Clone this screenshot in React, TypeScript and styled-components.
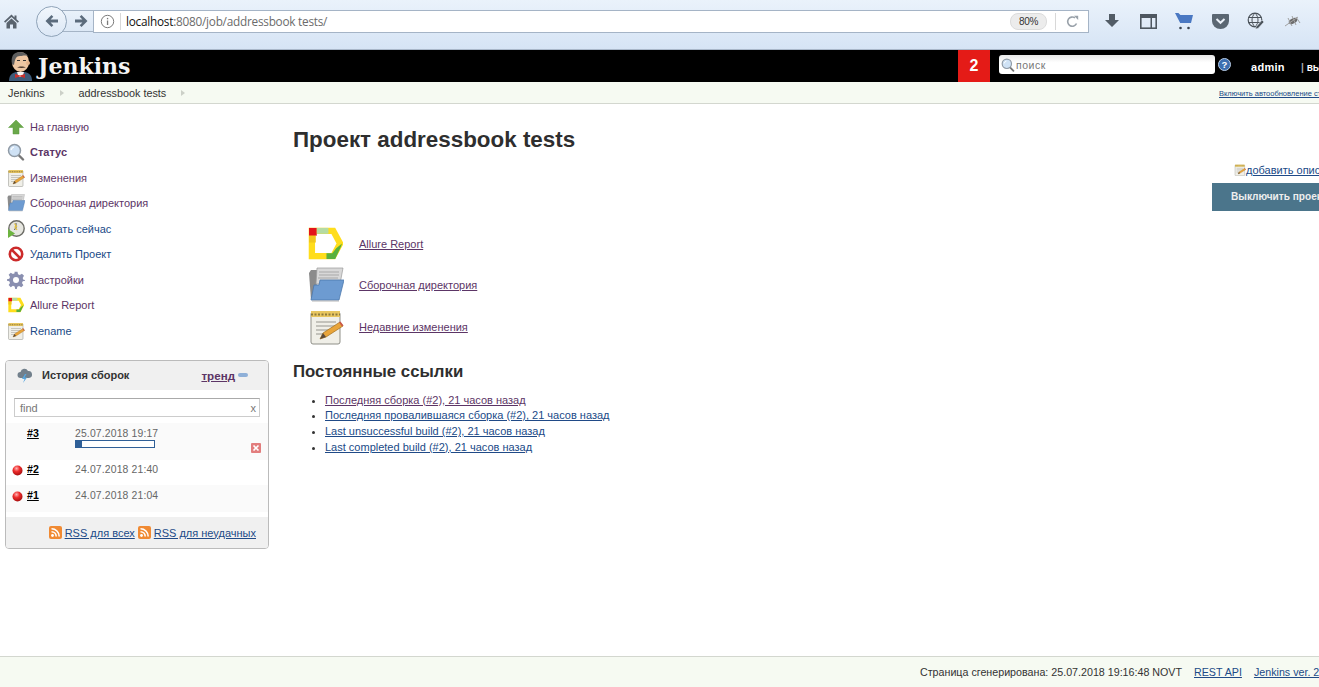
import styled, { createGlobalStyle } from "styled-components";

const GlobalStyle = createGlobalStyle`
  html, body {
    margin: 0;
    padding: 0;
    height: 100%;
    overflow: hidden;
    background: #fff;
    font-family: "Liberation Sans", Arial, sans-serif;
    font-size: 11px;
    color: #333;
  }
`;

const Page = styled.div`
  width: 1319px;
  height: 687px;
  display: flex;
  flex-direction: column;
  overflow: hidden;
`;

/* browser toolbar */
const Toolbar = styled.div`
  height: 50px;
  flex: none;
  display: flex;
  align-items: center;
  padding: 0 0 7px 3px;
  box-sizing: border-box;
  background: linear-gradient(#eaf2fb, #d6e4f5);
  border-bottom: 1px solid #a9b7c9;
`;

const HomeButton = styled.div`
  width: 17px;
  height: 17px;
  margin-right: 16px;
  display: flex;
`;

const BackButton = styled.div`
  width: 29px;
  height: 29px;
  flex: none;
  border: 1px solid #8fa3b8;
  border-radius: 50%;
  background: linear-gradient(#f1f6fc, #dce8f6);
  display: flex;
  align-items: center;
  justify-content: center;
  position: relative;
  z-index: 1;
`;

const ForwardButton = styled.div`
  width: 32px;
  height: 22px;
  margin-left: -6px;
  padding-left: 8px;
  box-sizing: border-box;
  flex: none;
  border: 1px solid #a5b4c6;
  border-right: none;
  background: linear-gradient(#e9f1fa, #dce8f6);
  display: flex;
  align-items: center;
  justify-content: center;
`;

const UrlBar = styled.div`
  width: 996px;
  height: 23px;
  box-sizing: border-box;
  flex: none;
  background: #fff;
  border: 1px solid #a5b4c6;
  display: flex;
  align-items: center;
  font-family: "Open Sans", "Liberation Sans", sans-serif;
  font-size: 11.8px;
  color: #6b6b6b;
`;

const InfoSlot = styled.div`
  width: 26px;
  height: 17px;
  margin-right: 5px;
  border-right: 1px solid #d8d8d8;
  display: flex;
  align-items: center;
  justify-content: center;
`;

const UrlText = styled.div`
  flex: 1;
  letter-spacing: -0.25px;
  b {
    font-weight: 400;
    color: #111;
  }
`;

const ZoomPill = styled.div`
  width: 35px;
  height: 15px;
  border-radius: 8px;
  background: #ececec;
  border: 1px solid #dcdcdc;
  font-family: "Liberation Sans", sans-serif;
  font-size: 10px;
  letter-spacing: -0.3px;
  color: #333;
  display: flex;
  align-items: center;
  justify-content: center;
  margin-right: 8px;
`;

const ReloadSlot = styled.div`
  width: 32px;
  height: 17px;
  border-left: 1px solid #d8d8d8;
  display: flex;
  align-items: center;
  justify-content: center;
`;

const ToolIcons = styled.div`
  display: flex;
  align-items: center;
  gap: 16px;
  margin-left: 13px;
`;

const ToolIcon = styled.div`
  width: 20px;
  height: 20px;
  display: flex;
  align-items: center;
  justify-content: center;
`;

/* jenkins header */
const Header = styled.header`
  height: 32px;
  flex: none;
  background: #000;
  display: flex;
  align-items: stretch;
  overflow: hidden;
`;

const Logo = styled.div`
  display: flex;
  align-items: center;
  padding-left: 8px;
  flex: none;
  width: 958px;
  box-sizing: border-box;
`;

const LogoText = styled.span`
  font-family: "DejaVu Serif", "Liberation Serif", serif;
  font-weight: 700;
  font-size: 22px;
  letter-spacing: 0;
  color: #f4f4f4;
  margin-left: 5px;
  line-height: 32px;
`;

const Badge = styled.div`
  width: 32px;
  background: #e41b17;
  color: #fff;
  font-weight: 700;
  font-size: 16px;
  display: flex;
  align-items: center;
  justify-content: center;
  flex: none;
`;

const SearchBox = styled.div`
  width: 216px;
  height: 19px;
  margin: 5px 0 0 9px;
  flex: none;
  box-sizing: border-box;
  background: linear-gradient(#e8e8e8, #fff 40%);
  border-radius: 3px;
  display: flex;
  align-items: center;
  gap: 1px;
  padding-left: 2px;
  color: #777;
  font-size: 10.5px;
  letter-spacing: 0.5px;
`;

const HelpDot = styled.div`
  margin: 8px 0 0 3px;
  flex: none;
  width: 13px;
  height: 13px;
`;

const AdminName = styled.span`
  color: #fff;
  font-weight: 700;
  font-size: 11px;
  letter-spacing: 0.3px;
  margin-left: 20px;
  line-height: 35px;
  flex: none;
`;

const Logout = styled.span`
  color: #fff;
  font-weight: 700;
  font-size: 10px;
  margin-left: 16px;
  line-height: 36px;
  flex: none;
  white-space: nowrap;
  &::before {
    content: "|";
    color: #aaa;
    margin-right: 3px;
  }
`;

/* breadcrumbs */
const Breadcrumbs = styled.nav`
  height: 22px;
  flex: none;
  box-sizing: border-box;
  background: #f6faf2;
  border-bottom: 1px solid #d3d7cf;
  display: flex;
  align-items: center;
  padding-left: 8px;
  color: #333;
  font-size: 10.8px;
  position: relative;
  overflow: hidden;
`;

const Crumb = styled.span`
  margin-right: 15px;
`;

const CrumbArrow = styled.span`
  width: 0;
  height: 0;
  margin-right: 15px;
  border-left: 4px solid #ccd0c8;
  border-top: 3.5px solid transparent;
  border-bottom: 3.5px solid transparent;
`;

const AutoRefresh = styled.a`
  position: absolute;
  left: 1219px;
  top: 7px;
  font-size: 7.5px;
  color: #204a87;
  text-decoration: underline;
  white-space: nowrap;
`;

/* body */
const Body = styled.div`
  flex: 1;
  min-height: 0;
  display: flex;
  overflow: hidden;
`;

const Side = styled.aside`
  width: 293px;
  flex: none;
  box-sizing: border-box;
  padding: 10px 0 0 5px;
`;

const Tasks = styled.div`
  display: flex;
  flex-direction: column;
  margin-bottom: 16px;
`;

const Task = styled.a<{ $visited?: boolean; $bold?: boolean }>`
  height: 25.5px;
  display: flex;
  align-items: center;
  gap: 5px;
  padding-left: 2px;
  font-size: 11px;
  font-weight: ${(p) => (p.$bold ? 700 : 400)};
  color: ${(p) => (p.$visited ? "#5c3566" : "#204a87")};
`;

const TaskIcon = styled.span`
  width: 18px;
  height: 18px;
  flex: none;
  display: flex;
  align-items: center;
  justify-content: center;
`;

const History = styled.section`
  width: 264px;
  height: 189px;
  box-sizing: border-box;
  border: 1px solid #bbb;
  border-radius: 4px;
  overflow: hidden;
  display: flex;
  flex-direction: column;
`;

const HistoryHead = styled.div`
  height: 29px;
  flex: none;
  background: #f0f0f0;
  display: flex;
  align-items: center;
  padding-left: 11px;
  color: #333;
  font-weight: 700;
  font-size: 11px;
`;

const HistoryTitle = styled.span`
  margin-left: 9px;
  flex: 1;
`;

const TrendLink = styled.a`
  color: #5c3566;
  text-decoration: underline;
  font-size: 11.6px;
  margin-right: 3px;
`;

const TrendDash = styled.span`
  width: 10px;
  height: 4px;
  border-radius: 2px;
  background: #8fb0d8;
  margin-right: 20px;
`;

const FindRow = styled.div`
  height: 19px;
  margin: 8px 8px 6px 8px;
  flex: none;
  box-sizing: border-box;
  border: 1px solid #ccc;
  border-top-color: #aaa;
  display: flex;
  align-items: center;
  justify-content: space-between;
  padding: 1px 3px 0 5px;
  color: #777;
  font-size: 11px;
`;

const BuildRow = styled.div<{ $height: number; $top: number; $alt?: boolean }>`
  height: ${(p) => p.$height}px;
  padding-top: ${(p) => p.$top}px;
  flex: none;
  background: ${(p) => (p.$alt ? "#fafafa" : "#fff")};
  display: grid;
  grid-template-columns: 15px 48px 1fr 18px;
  padding-left: 6px;
  box-sizing: border-box;
`;

const BallSlot = styled.span`
  width: 11px;
  height: 11px;
  margin-top: 2px;
`;

const BuildLink = styled.a`
  color: #000;
  font-weight: 700;
  font-size: 10.6px;
  text-decoration: underline;
  line-height: 13px;
`;

const BuildTime = styled.div`
  color: #666;
  font-size: 10.4px;
  letter-spacing: 0.15px;
  line-height: 13px;
`;

const Progress = styled.div`
  width: 80px;
  height: 8px;
  box-sizing: border-box;
  border: 1px solid #2f5f97;
  background: #fff;
`;

const ProgressFill = styled.div`
  height: 100%;
  background: #2f5f97;
`;

const StopSlot = styled.div`
  margin: 16px 0 0 1px;
`;

const HistoryFoot = styled.div`
  margin-top: auto;
  height: 30px;
  flex: none;
  background: #f0f0f0;
  display: flex;
  align-items: center;
  justify-content: flex-end;
  gap: 3px;
  padding: 1px 12px 0 0;
`;

const RssLink = styled.a`
  color: #204a87;
  text-decoration: underline;
  font-size: 11px;
`;

const Main = styled.main`
  flex: 1;
  min-width: 0;
  position: relative;
  padding-top: 23px;
`;

const Title = styled.h1`
  margin: 0 0 71px;
  font-size: 22.4px;
  line-height: 25px;
  font-weight: 700;
  color: #2e2e2e;
`;

const BigLinks = styled.div`
  display: flex;
  flex-direction: column;
  margin-left: 14px;
`;

const BigLink = styled.div`
  height: 41.5px;
  display: flex;
  align-items: center;
  gap: 15px;
`;

const BigIcon = styled.span`
  width: 37px;
  height: 37px;
  flex: none;
  display: flex;
  align-items: center;
  justify-content: center;
`;

const PurpleLink = styled.a`
  color: #5c3566;
  text-decoration: underline;
  font-size: 11px;
`;

const Subtitle = styled.h2`
  margin: 14px 0 11px;
  font-size: 16.8px;
  line-height: 20px;
  font-weight: 700;
  color: #2e2e2e;
`;

const PermaList = styled.ul`
  margin: 0;
  padding: 0 0 0 32px;
  list-style: disc;
  font-size: 11px;
  li {
    line-height: 15.7px;
  }
`;

const PermaLink = styled.a<{ $visited?: boolean }>`
  color: ${(p) => (p.$visited ? "#5c3566" : "#204a87")};
  text-decoration: underline;
`;

const SideActions = styled.div`
  position: absolute;
  left: 919px;
  top: 59px;
  white-space: nowrap;
`;

const AddDescription = styled.a`
  display: flex;
  align-items: center;
  margin-left: 22px;
  height: 14px;
  color: #204a87;
  font-size: 11px;
  text-decoration: underline;
`;

const DisableButton = styled.div`
  margin-top: 6px;
  width: 200px;
  height: 28px;
  box-sizing: border-box;
  background: #4b758b;
  color: #eee;
  font-weight: 700;
  font-size: 10.1px;
  line-height: 28px;
  padding-left: 19px;
`;

const Footer = styled.footer`
  height: 31px;
  flex: none;
  box-sizing: border-box;
  background: #f6faf2;
  border-top: 1px solid #d3d7cf;
  display: flex;
  align-items: center;
  padding-left: 920px;
  white-space: nowrap;
  font-size: 10.7px;
  color: #333;
  gap: 12px;
  overflow: hidden;
`;

const FootLink = styled.a`
  color: #204a87;
  text-decoration: underline;
`;

/* drawings */
const Home = () => (
  <svg width="17" height="17" viewBox="0 0 17 17">
    <path d="M8.5 1.5 1 8.5l1.2 1.2L8.5 4l6.3 5.7L16 8.5l-2.5-2.3V2.5h-2v1.9z" fill="#59636e" />
    <path d="M3.5 10 8.5 5.5l5 4.5v5.5H10v-4H7v4H3.5z" fill="#59636e" />
  </svg>
);

const Arrow = ({ flip = false }: { flip?: boolean }) => (
  <svg width="15" height="14" viewBox="0 0 15 14" style={flip ? { transform: "scaleX(-1)" } : undefined}>
    <path d="M7.5 1 1.5 7l6 6 1.8-1.8L6.6 8.6H14V5.4H6.6l2.7-2.6z" fill="#5b6b7c" />
  </svg>
);

const Info = () => (
  <svg width="15" height="15" viewBox="0 0 15 15">
    <circle cx="7.5" cy="7.5" r="6.2" fill="none" stroke="#7a7a7a" />
    <rect x="6.9" y="6.5" width="1.3" height="4.5" fill="#7a7a7a" />
    <rect x="6.9" y="3.9" width="1.3" height="1.4" fill="#7a7a7a" />
  </svg>
);

const Reload = () => (
  <svg width="13" height="13" viewBox="0 0 13 13">
    <path d="M10.5 8.5A4.6 4.6 0 1 1 9 2.9" fill="none" stroke="#9aa2aa" strokeWidth="1.6" />
    <path d="M8 .8h4.2V5z" fill="#9aa2aa" />
  </svg>
);

const Download = () => (
  <svg width="16" height="16" viewBox="0 0 16 16">
    <path d="M5 1h6v6h4l-7 7-7-7h4z" fill="#525c66" />
  </svg>
);

const Library = () => (
  <svg width="17" height="15" viewBox="0 0 17 15">
    <rect x=".8" y=".8" width="15.4" height="13.4" fill="none" stroke="#4e5760" strokeWidth="1.6" />
    <rect x="1" y="1" width="15" height="3" fill="#4e5760" />
    <rect x="10.5" y="3" width="1.5" height="11" fill="#4e5760" />
  </svg>
);

const Cart = () => (
  <svg width="18" height="18" viewBox="0 0 18 18">
    <path d="M0 1h3.4l2 2H18l-2 8H5.2z" fill="#4a78c2" />
    <circle cx="5.5" cy="16" r="1.3" fill="#39424c" />
    <circle cx="13.5" cy="16" r="1.3" fill="#39424c" />
  </svg>
);

const Pocket = () => (
  <svg width="17" height="15" viewBox="0 0 17 15">
    <path d="M1 0h15a1 1 0 0 1 1 1v6a8.5 8 0 0 1-17 0V1a1 1 0 0 1 1-1z" fill="#5a6672" />
    <path d="m4.5 5 4 3.8 4-3.8" fill="none" stroke="#eaf0f8" strokeWidth="2" />
  </svg>
);

const Globe = () => (
  <svg width="18" height="18" viewBox="0 0 18 18">
    <circle cx="8" cy="8" r="6.8" fill="#e3ebf5" stroke="#4b535b" strokeWidth="1.2" />
    <path d="M1.5 5.5h13M1.5 10.5h13M8 1c-4 4-4 10 0 14M8 1c4 4 4 10 0 14" fill="none" stroke="#4b535b" />
    <path d="m9 15 6-7 2 2-6 6.5-2.6.6z" fill="#4b535b" stroke="#e3ebf5" strokeWidth=".6" />
  </svg>
);

const Bug = () => (
  <svg width="17" height="13" viewBox="0 0 17 13">
    <ellipse cx="9" cy="6" rx="4.5" ry="2.6" fill="#6b6b6b" transform="rotate(-25 9 6)" />
    <path d="M1 11 14 2M4 3l4 8M8 1l4 9M12 2l4 6" stroke="#a0a0a0" fill="none" />
  </svg>
);

const Butler = () => (
  <svg width="25" height="30" viewBox="0 0 25 30">
    <path d="M1 30c0-6 3-8 7-9h9c4 1 7 3 7 9z" fill="#3d5a78" />
    <path d="M9 21h7l-1.5 5h-4z" fill="#f5f5f5" />
    <path d="M7 23l5 1.5 5-1.5v4l-5-1.5L7 27z" fill="#c9302c" />
    <ellipse cx="12.5" cy="11" rx="8.5" ry="10" fill="#eec7a3" />
    <path d="M5 4c3-4 12-4 15 1-4-1-5 0-8 0-4 0-5 3-6 9l-2-1C3 9 4 6 5 4z" fill="#5f5f5f" />
    <circle cx="20" cy="12" r="2" fill="#e6b48c" />
    <path d="M9 9.5h3M15 9.5h3" stroke="#333" strokeWidth="1.2" />
    <path d="M9 16.5c2-1.5 7-1.5 9 0-3 .6-6 .6-9 0z" fill="#49382e" />
  </svg>
);

const SearchGlass = ({ size = 18 }: { size?: number }) => (
  <svg width={size} height={size} viewBox="0 0 18 18">
    <path d="m11 11.5 5 5" stroke="#777" strokeWidth="2.4" strokeLinecap="round" />
    <circle cx="7.5" cy="7.5" r="6" fill="#cfe2f5" stroke="#8f9aa5" strokeWidth="1.5" />
    <path d="M4 7a4 4 0 0 1 3-3" stroke="#fff" fill="none" strokeWidth="1.2" />
  </svg>
);

const Help = () => (
  <svg width="13" height="13" viewBox="0 0 13 13">
    <circle cx="6.5" cy="6.5" r="6" fill="#3d6fb0" stroke="#b9cde6" />
    <text x="6.5" y="10" textAnchor="middle" fill="#fff" fontSize="9.5" fontWeight="700" fontFamily="Liberation Sans">?</text>
  </svg>
);

const UpArrow = () => (
  <svg width="16" height="16" viewBox="0 0 16 16">
    <path d="M8 1 .5 8.5H5V15h6V8.5h4.5z" fill="#6aa84a" stroke="#5b9a3c" strokeWidth=".5" />
  </svg>
);

const Notepad = ({ size = 18 }: { size?: number }) => (
  <svg width={size} height={size} viewBox="0 0 36 36">
    <rect x="3" y="3" width="29" height="32" rx="2" fill="#f0efe8" stroke="#8f8f88" />
    <rect x="3" y="2" width="29" height="6" fill="#e8c660" />
    <path d="M3 5.5h29" stroke="#8c7a3c" strokeDasharray="2 1.5" strokeWidth="2" />
    <path d="M8 13h20M8 17h20M8 21h13M8 25h9" stroke="#b4b4ac" strokeWidth="1.4" />
    <path d="m12 30 3-6 17-11 3 4-17 11z" fill="#e9a53a" stroke="#a06f1d" strokeWidth=".7" />
    <path d="m31 13.5 1.5-1 3 4-1.5 1z" fill="#c9584a" />
    <path d="m12 30 3-6 3 4z" fill="#5a4a3a" />
  </svg>
);

const Folder = ({ size = 18 }: { size?: number }) => (
  <svg width={size} height={size} viewBox="0 0 36 36">
    <path d="M1 6 3 3h8l2 3L3 33z" fill="#8b8b8b" />
    <path d="M9 1h26l-3 16H8z" fill="#d8d8d8" stroke="#999" strokeWidth=".7" />
    <path d="M11 5h20M11 8h20M10 11h20" stroke="#a8a8a8" />
    <path d="M12 13h24l-5 20H3l3-15h5z" fill="#6d9bd1" stroke="#4d78ad" strokeWidth=".8" />
    <path d="M4 34h27" stroke="#999" strokeWidth="1.2" opacity=".6" />
  </svg>
);

const Clock = () => (
  <svg width="18" height="18" viewBox="0 0 18 18">
    <circle cx="9.5" cy="8.5" r="7.7" fill="#e6e6e0" stroke="#6c6c66" strokeWidth="1.4" />
    <path d="M9 3v5.5l-2 1" stroke="#555" fill="none" />
    <path d="m7.5 3.5 2 3-1.5.5 2 3" stroke="#e5c33a" fill="none" strokeWidth="1.2" />
    <path d="M1 9v9l7-4.5z" fill="#6cb33f" />
  </svg>
);

const Forbidden = () => (
  <svg width="16" height="16" viewBox="0 0 16 16">
    <circle cx="8" cy="8" r="6.2" fill="#fff" stroke="#cc2a2a" strokeWidth="2.6" />
    <path d="m3.6 3.6 8.8 8.8" stroke="#cc2a2a" strokeWidth="2.6" />
  </svg>
);

const Gear = () => (
  <svg width="18" height="18" viewBox="0 0 24 24">
    <path
      d="M10 1h4l.7 3.3 2.3 1 2.9-1.8 2.8 2.8-1.8 2.9 1 2.3L24 12v1l-3 .8-1 2.3 1.8 2.9-2.8 2.8-2.9-1.8-2.3 1L13 24h-2l-.8-3.2-2.3-1L5 21.6l-2.8-2.8L4 15.9l-1-2.3L0 13v-2l3-.7 1-2.3L2.2 5.1 5 2.3l2.9 1.8 2.3-1z"
      fill="#8a8fb0"
    />
    <circle cx="12" cy="12" r="4" fill="#fff" />
  </svg>
);

const Allure = ({ size = 16 }: { size?: number }) => (
  <svg width={size} height={size} viewBox="0 0 36 34">
    <path d="M4 8V4h22l7 13-7 13H4V8" fill="none" stroke="#ffdd1c" strokeWidth="6.5" />
    <path d="M1 1h8v8H1z" fill="#e3131a" />
    <path d="M9 1h12v6H9z" fill="#b5dba3" />
    <path d="M1 9h7v7H1z" fill="#f1c71c" />
    <path d="m29 22 6-5-1 3-6 13h-9v-6h6z" fill="#5ab03b" />
  </svg>
);

const CloudStorm = () => (
  <svg width="16" height="15" viewBox="0 0 16 15">
    <path d="M3.5 10a3 3 0 0 1 0-6 4 4 0 0 1 7.5-1 3.4 3.4 0 0 1 1 7z" fill="#72808c" />
    <path d="m8 6-3 5h2.5L6 15l4-5.5H7.5L9.5 6z" fill="#58a7e0" />
  </svg>
);

const Ball = () => (
  <svg width="11" height="11" viewBox="0 0 11 11">
    <defs>
      <radialGradient id="ball" cx="40%" cy="30%" r="70%">
        <stop offset="0" stopColor="#ffb3b3" />
        <stop offset=".45" stopColor="#ee2c2c" />
        <stop offset="1" stopColor="#a80f0f" />
      </radialGradient>
    </defs>
    <circle cx="5.5" cy="5.5" r="5" fill="url(#ball)" />
  </svg>
);

const StopButton = () => (
  <svg width="10" height="10" viewBox="0 0 10 10">
    <rect width="10" height="10" rx="1" fill="#e27d7d" />
    <path d="m2.5 2.5 5 5m0-5-5 5" stroke="#fff" strokeWidth="1.6" />
  </svg>
);

const Rss = () => (
  <svg width="13" height="13" viewBox="0 0 13 13">
    <rect width="13" height="13" rx="2" fill="#f08a33" />
    <circle cx="3.5" cy="9.5" r="1.4" fill="#fff" />
    <path d="M2.5 5.8a4.7 4.7 0 0 1 4.7 4.7M2.5 2.8a7.7 7.7 0 0 1 7.7 7.7" fill="none" stroke="#fff" strokeWidth="1.6" />
  </svg>
);

const tasks = [
  { label: "На главную", icon: <UpArrow />, visited: true },
  { label: "Статус", icon: <SearchGlass />, visited: true, bold: true },
  { label: "Изменения", icon: <Notepad />, visited: true },
  { label: "Сборочная директория", icon: <Folder />, visited: true },
  { label: "Собрать сейчас", icon: <Clock /> },
  { label: "Удалить Проект", icon: <Forbidden /> },
  { label: "Настройки", icon: <Gear />, visited: true },
  { label: "Allure Report", icon: <Allure />, visited: true },
  { label: "Rename", icon: <Notepad /> },
];

const perma = [
  { label: "Последняя сборка (#2), 21 часов назад", visited: true },
  { label: "Последняя провалившаяся сборка (#2), 21 часов назад" },
  { label: "Last unsuccessful build (#2), 21 часов назад" },
  { label: "Last completed build (#2), 21 часов назад" },
];

export default function App() {
  return (
    <Page>
      <GlobalStyle />
      <Toolbar>
        <HomeButton>
          <Home />
        </HomeButton>
        <BackButton>
          <Arrow />
        </BackButton>
        <ForwardButton>
          <Arrow flip />
        </ForwardButton>
        <UrlBar>
          <InfoSlot>
            <Info />
          </InfoSlot>
          <UrlText>
            <b>localhost</b>:8080/job/addressbook tests/
          </UrlText>
          <ZoomPill>80%</ZoomPill>
          <ReloadSlot>
            <Reload />
          </ReloadSlot>
        </UrlBar>
        <ToolIcons>
          <ToolIcon>
            <Download />
          </ToolIcon>
          <ToolIcon>
            <Library />
          </ToolIcon>
          <ToolIcon>
            <Cart />
          </ToolIcon>
          <ToolIcon>
            <Pocket />
          </ToolIcon>
          <ToolIcon>
            <Globe />
          </ToolIcon>
          <ToolIcon>
            <Bug />
          </ToolIcon>
        </ToolIcons>
      </Toolbar>

      <Header>
        <Logo>
          <Butler />
          <LogoText>Jenkins</LogoText>
        </Logo>
        <Badge>2</Badge>
        <SearchBox>
          <SearchGlass size={14} />
          поиск
        </SearchBox>
        <HelpDot>
          <Help />
        </HelpDot>
        <AdminName>admin</AdminName>
        <Logout>выход</Logout>
      </Header>

      <Breadcrumbs>
        <Crumb>Jenkins</Crumb>
        <CrumbArrow />
        <Crumb>addressbook tests</Crumb>
        <CrumbArrow />
        <AutoRefresh>Включить автообновление страницы</AutoRefresh>
      </Breadcrumbs>

      <Body>
        <Side>
          <Tasks>
            {tasks.map((t) => (
              <Task key={t.label} $visited={t.visited} $bold={t.bold}>
                <TaskIcon>{t.icon}</TaskIcon>
                {t.label}
              </Task>
            ))}
          </Tasks>
          <History>
            <HistoryHead>
              <CloudStorm />
              <HistoryTitle>История сборок</HistoryTitle>
              <TrendLink>тренд</TrendLink>
              <TrendDash />
            </HistoryHead>
            <FindRow>
              <span>find</span>
              <span>x</span>
            </FindRow>
            <BuildRow $height={37} $top={4} $alt>
              <BallSlot />
              <BuildLink>#3</BuildLink>
              <div>
                <BuildTime>25.07.2018 19:17</BuildTime>
                <Progress>
                  <ProgressFill style={{ width: "8%" }} />
                </Progress>
              </div>
              <StopSlot>
                <StopButton />
              </StopSlot>
            </BuildRow>
            <BuildRow $height={25} $top={3}>
              <BallSlot>
                <Ball />
              </BallSlot>
              <BuildLink>#2</BuildLink>
              <BuildTime>24.07.2018 21:40</BuildTime>
            </BuildRow>
            <BuildRow $height={27} $top={4} $alt>
              <BallSlot>
                <Ball />
              </BallSlot>
              <BuildLink>#1</BuildLink>
              <BuildTime>24.07.2018 21:04</BuildTime>
            </BuildRow>
            <HistoryFoot>
              <Rss />
              <RssLink>RSS для всех</RssLink>
              <Rss />
              <RssLink>RSS для неудачных</RssLink>
            </HistoryFoot>
          </History>
        </Side>
        <Main>
          <Title>Проект addressbook tests</Title>
          <BigLinks>
            <BigLink>
              <BigIcon>
                <Allure size={35} />
              </BigIcon>
              <PurpleLink>Allure Report</PurpleLink>
            </BigLink>
            <BigLink>
              <BigIcon>
                <Folder size={36} />
              </BigIcon>
              <PurpleLink>Сборочная директория</PurpleLink>
            </BigLink>
            <BigLink>
              <BigIcon>
                <Notepad size={36} />
              </BigIcon>
              <PurpleLink>Недавние изменения</PurpleLink>
            </BigLink>
          </BigLinks>
          <Subtitle>Постоянные ссылки</Subtitle>
          <PermaList>
            {perma.map((p) => (
              <li key={p.label}>
                <PermaLink $visited={p.visited}>{p.label}</PermaLink>
              </li>
            ))}
          </PermaList>
          <SideActions>
            <AddDescription>
              <Notepad size={12} />
              добавить описание
            </AddDescription>
            <DisableButton>Выключить проект</DisableButton>
          </SideActions>
        </Main>
      </Body>

      <Footer>
        <span>Страница сгенерирована: 25.07.2018 19:16:48 NOVT</span>
        <FootLink>REST API</FootLink>
        <FootLink>Jenkins ver. 2.134</FootLink>
      </Footer>
    </Page>
  );
}
